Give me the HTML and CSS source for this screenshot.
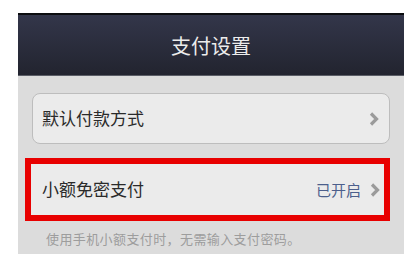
FILE: index.html
```html
<!DOCTYPE html>
<html lang="zh">
<head>
<meta charset="utf-8">
<link rel="stylesheet" href="styles.css">
</head>
<body>
<div class="screen">
  <div class="statusbar"></div>
  <div class="navbar">支付设置</div>
  <div class="content">
    <div class="card">
      <span class="label">默认付款方式</span>
      <svg class="chev" width="10" height="14" viewBox="0 0 10 14"><polyline points="2,1.5 7.5,7 2,12.5" fill="none" stroke="#9b9b9b" stroke-width="3.2"/></svg>
    </div>
    <div class="highlight">
      <div class="card inner">
        <span class="label">小额免密支付</span>
        <span class="right"><span class="status">已开启</span><svg class="chev" width="10" height="14" viewBox="0 0 10 14"><polyline points="2,1.5 7.5,7 2,12.5" fill="none" stroke="#9b9b9b" stroke-width="3.2"/></svg></span>
      </div>
    </div>
    <p class="note">使用手机小额支付时，无需输入支付密码。</p>
  </div>
</div>
</body>
</html>
```
FILE: styles.css
```css
html, body {
  margin: 0;
  padding: 0;
  background: #ffffff;
  font-family: "Noto Sans CJK SC", "Noto Sans", sans-serif;
}
.screen {
  margin: 13px 0 0 18px;
  width: 386px;
  height: 241px;
  display: flex;
  flex-direction: column;
}
.statusbar {
  height: 2px;
  background: #0c0d10;
}
.navbar {
  height: 60px;
  background: linear-gradient(#33364a, #22242f);
  color: #ececec;
  font-size: 20px;
  display: flex;
  align-items: center;
  justify-content: center;
  border-bottom: 1px solid #5a5d66;
}
.content {
  flex: 1;
  background: #dcdcdc;
  padding: 17px 14px 0 14px;
  display: flex;
  flex-direction: column;
}
.card {
  height: 49px;
  border: 1px solid #bdbdbd;
  border-radius: 8px;
  background: #ebebeb;
  display: flex;
  align-items: center;
  justify-content: space-between;
  padding: 0 10px 0 9px;
}
.label {
  font-size: 17px;
  color: #2a2a2a;
  margin-top: -2px;
}
.chev {
  display: block;
}
.highlight {
  margin: 14px 0 0 -7px;
  border: 6px solid #e80000;
  background: #ececec;
}
.inner {
  height: 51px;
  border: none;
  border-radius: 0;
  padding: 0 4px 0 11px;
}
.right {
  display: flex;
  align-items: center;
  gap: 9px;
}
.status {
  font-size: 15px;
  color: #4c5f8c;
}
.note {
  margin: 8px 0 0 14px;
  font-size: 13px;
  letter-spacing: 0.4px;
  color: #9d9d9d;
}
```
